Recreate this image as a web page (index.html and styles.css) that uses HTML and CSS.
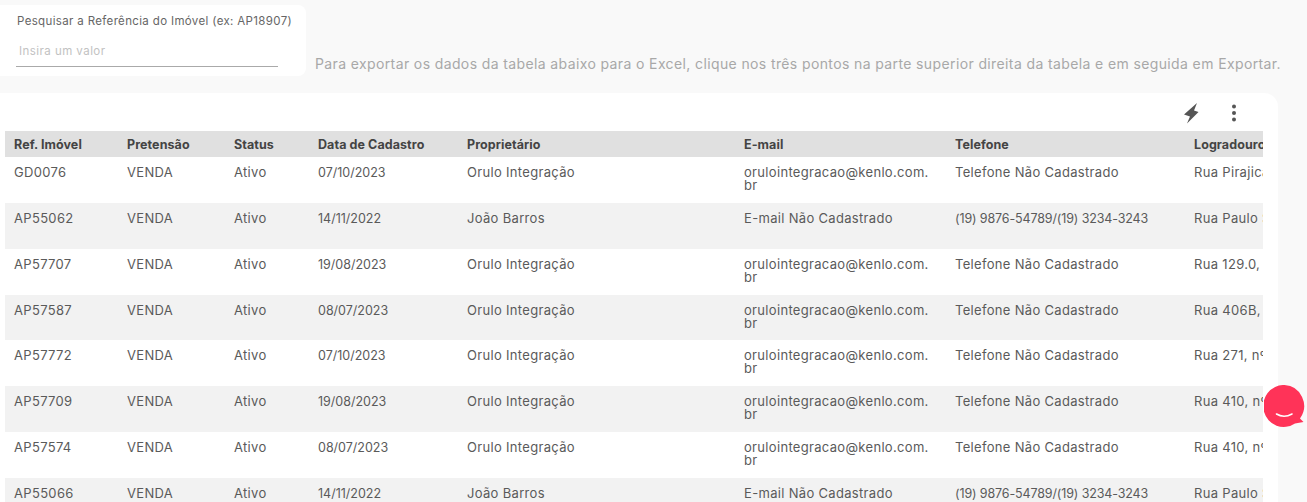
FILE: index.html
```html
<!DOCTYPE html>
<html lang="pt-BR">
<head>
<meta charset="utf-8">
<title>Imóveis</title>
<link rel="stylesheet" href="styles.css">
</head>
<body>
<div class="top">
  <div class="search">
    <div class="search-label">Pesquisar a Referência do Imóvel (ex: AP18907)</div>
    <div class="search-input">Insira um valor</div>
  </div>
  <p class="hint">Para exportar os dados da tabela abaixo para o Excel, clique nos três pontos na parte superior direita da tabela e em seguida em Exportar.</p>
</div>
<section class="card">
  <div class="tools">
    <svg class="bolt" viewBox="0 0 24 24" width="24" height="24"><path fill="#555" d="M5 13.500 18 2l-3 7.500 4.500 1.500L8 22.500l3-7z"/></svg>
    <svg class="dots" viewBox="0 0 24 24" width="24" height="24"><circle cx="12" cy="5.500" r="2" fill="#555"/><circle cx="12" cy="12" r="2" fill="#555"/><circle cx="12" cy="18.500" r="2" fill="#555"/></svg>
  </div>
  <div class="table-wrap">
    <table>
      <colgroup>
        <col class="c1"><col class="c2"><col class="c3"><col class="c4"><col class="c5"><col class="c6"><col class="c7"><col class="c8">
      </colgroup>
      <thead>
        <tr><th>Ref. Imóvel</th><th>Pretensão</th><th>Status</th><th>Data de Cadastro</th><th>Proprietário</th><th>E-mail</th><th>Telefone</th><th>Logradouro</th></tr>
      </thead>
      <tbody>
        <tr><td>GD0076</td><td>VENDA</td><td>Ativo</td><td class="num">07/10/2023</td><td>Orulo Integração</td><td>orulointegracao@kenlo.com.<br>br</td><td>Telefone Não Cadastrado</td><td>Rua Pirajicaba</td></tr>
        <tr><td>AP55062</td><td>VENDA</td><td>Ativo</td><td class="num">14/11/2022</td><td>João Barros</td><td>E-mail Não Cadastrado</td><td class="phone">(19) 9876-54789/(19) 3234-3243</td><td>Rua Paulo Souza</td></tr>
        <tr><td>AP57707</td><td>VENDA</td><td>Ativo</td><td class="num">19/08/2023</td><td>Orulo Integração</td><td>orulointegracao@kenlo.com.<br>br</td><td>Telefone Não Cadastrado</td><td>Rua 129.0, nº 10</td></tr>
        <tr><td>AP57587</td><td>VENDA</td><td>Ativo</td><td class="num">08/07/2023</td><td>Orulo Integração</td><td>orulointegracao@kenlo.com.<br>br</td><td>Telefone Não Cadastrado</td><td>Rua 406B, nº 10</td></tr>
        <tr><td>AP57772</td><td>VENDA</td><td>Ativo</td><td class="num">07/10/2023</td><td>Orulo Integração</td><td>orulointegracao@kenlo.com.<br>br</td><td>Telefone Não Cadastrado</td><td>Rua 271, nº 100</td></tr>
        <tr><td>AP57709</td><td>VENDA</td><td>Ativo</td><td class="num">19/08/2023</td><td>Orulo Integração</td><td>orulointegracao@kenlo.com.<br>br</td><td>Telefone Não Cadastrado</td><td>Rua 410, nº 100</td></tr>
        <tr><td>AP57574</td><td>VENDA</td><td>Ativo</td><td class="num">08/07/2023</td><td>Orulo Integração</td><td>orulointegracao@kenlo.com.<br>br</td><td>Telefone Não Cadastrado</td><td>Rua 410, nº 100</td></tr>
        <tr><td>AP55066</td><td>VENDA</td><td>Ativo</td><td class="num">14/11/2022</td><td>João Barros</td><td>E-mail Não Cadastrado</td><td class="phone">(19) 9876-54789/(19) 3234-3243</td><td>Rua Paulo Souza</td></tr>
      </tbody>
    </table>
  </div>
</section>
<div class="chat" aria-label="Chat">
  <svg viewBox="0 0 44 44" width="44" height="44"><path fill="#ff3358" d="M20.500 0A20.500 21 0 1 0 31 38.500L39.500 37 36 33.500A20.500 21 0 0 0 20.500 0z"/><path fill="none" stroke="#fff" stroke-width="1.600" stroke-linecap="round" d="M12.500 29c4.500 2.800 10.500 2.800 15.500 0"/></svg>
</div>
</body>
</html>
```
FILE: styles.css
```css
* { box-sizing: border-box; }
html, body { height: 100%; }
body {
  margin: 0;
  height: 502px;
  overflow: hidden;
  background: #f9f9f9;
  font-family: "Inter", "Open Sans", sans-serif;
  color: #555;
}
.top {
  display: flex;
  align-items: flex-end;
  padding-top: 5px;
  height: 93px;
  padding-bottom: 17px;
}
.search {
  width: 306px;
  height: 71px;
  background: #fff;
  border-radius: 0 8px 8px 0;
  padding: 9px 16px 0;
}
.search-label {
  font-size: 11.500px;
  line-height: 15px;
  color: #666;
  white-space: nowrap;
  letter-spacing: 0.35px;
  padding-left: 1px;
}
.search-input {
  margin-top: 15px;
  width: 262px;
  height: 23px;
  padding: 0 0 8px 3px;
  font-size: 11.500px;
  line-height: 14px;
  color: #c2c2c2;
  border-bottom: 1px solid #aaa;
  letter-spacing: 0.45px;
}
.hint {
  margin: 0 0 3px 9px;
  font-size: 14px;
  line-height: 18px;
  color: #a8a8a8;
  white-space: nowrap;
  letter-spacing: 0.38px;
}
.card {
  background: #fff;
  width: 1278px;
  height: 409px;
  border-radius: 0 14px 0 0;
  padding: 0 15px 0 5px;
}
.tools {
  display: flex;
  justify-content: flex-end;
  align-items: center;
  gap: 19px;
  height: 38px;
  padding-top: 2px;
  padding-right: 17px;
}
.table-wrap { overflow: hidden; width: 1258px; }
table {
  table-layout: fixed;
  border-collapse: collapse;
  width: 1376px;
  font-size: 13px;
}
.c1 { width: 113px; }
.c2 { width: 107px; }
.c3 { width: 84px; }
.c4 { width: 149px; }
.c5 { width: 277px; }
.c6 { width: 211px; }
.c7 { width: 239px; }
.c8 { width: 196px; }
th, td {
  text-align: left;
  padding: 0 9px;
  vertical-align: top;
  overflow: hidden;
  white-space: nowrap;
}
thead tr { height: 26px; background: #e0e0e0; }
th {
  font-size: 12.500px;
  font-weight: 700;
  color: #444;
  line-height: 24px;
  padding-top: 2px;
  letter-spacing: 0.08px;
}
tbody tr { height: 45.850px; }
td {
  padding-top: 9px;
  line-height: 13px;
  color: #5a5a5a;
  letter-spacing: 0.32px;
}
td.num { font-size: 12.500px; letter-spacing: 0; }
td.phone { font-size: 12.500px; letter-spacing: -0.13px; }
tbody tr:nth-child(even) { background: #f2f2f2; }
.chat {
  position: fixed;
  left: 1264px;
  top: 385px;
  width: 44px;
  height: 44px;
}
.chat svg { display: block; }
```
